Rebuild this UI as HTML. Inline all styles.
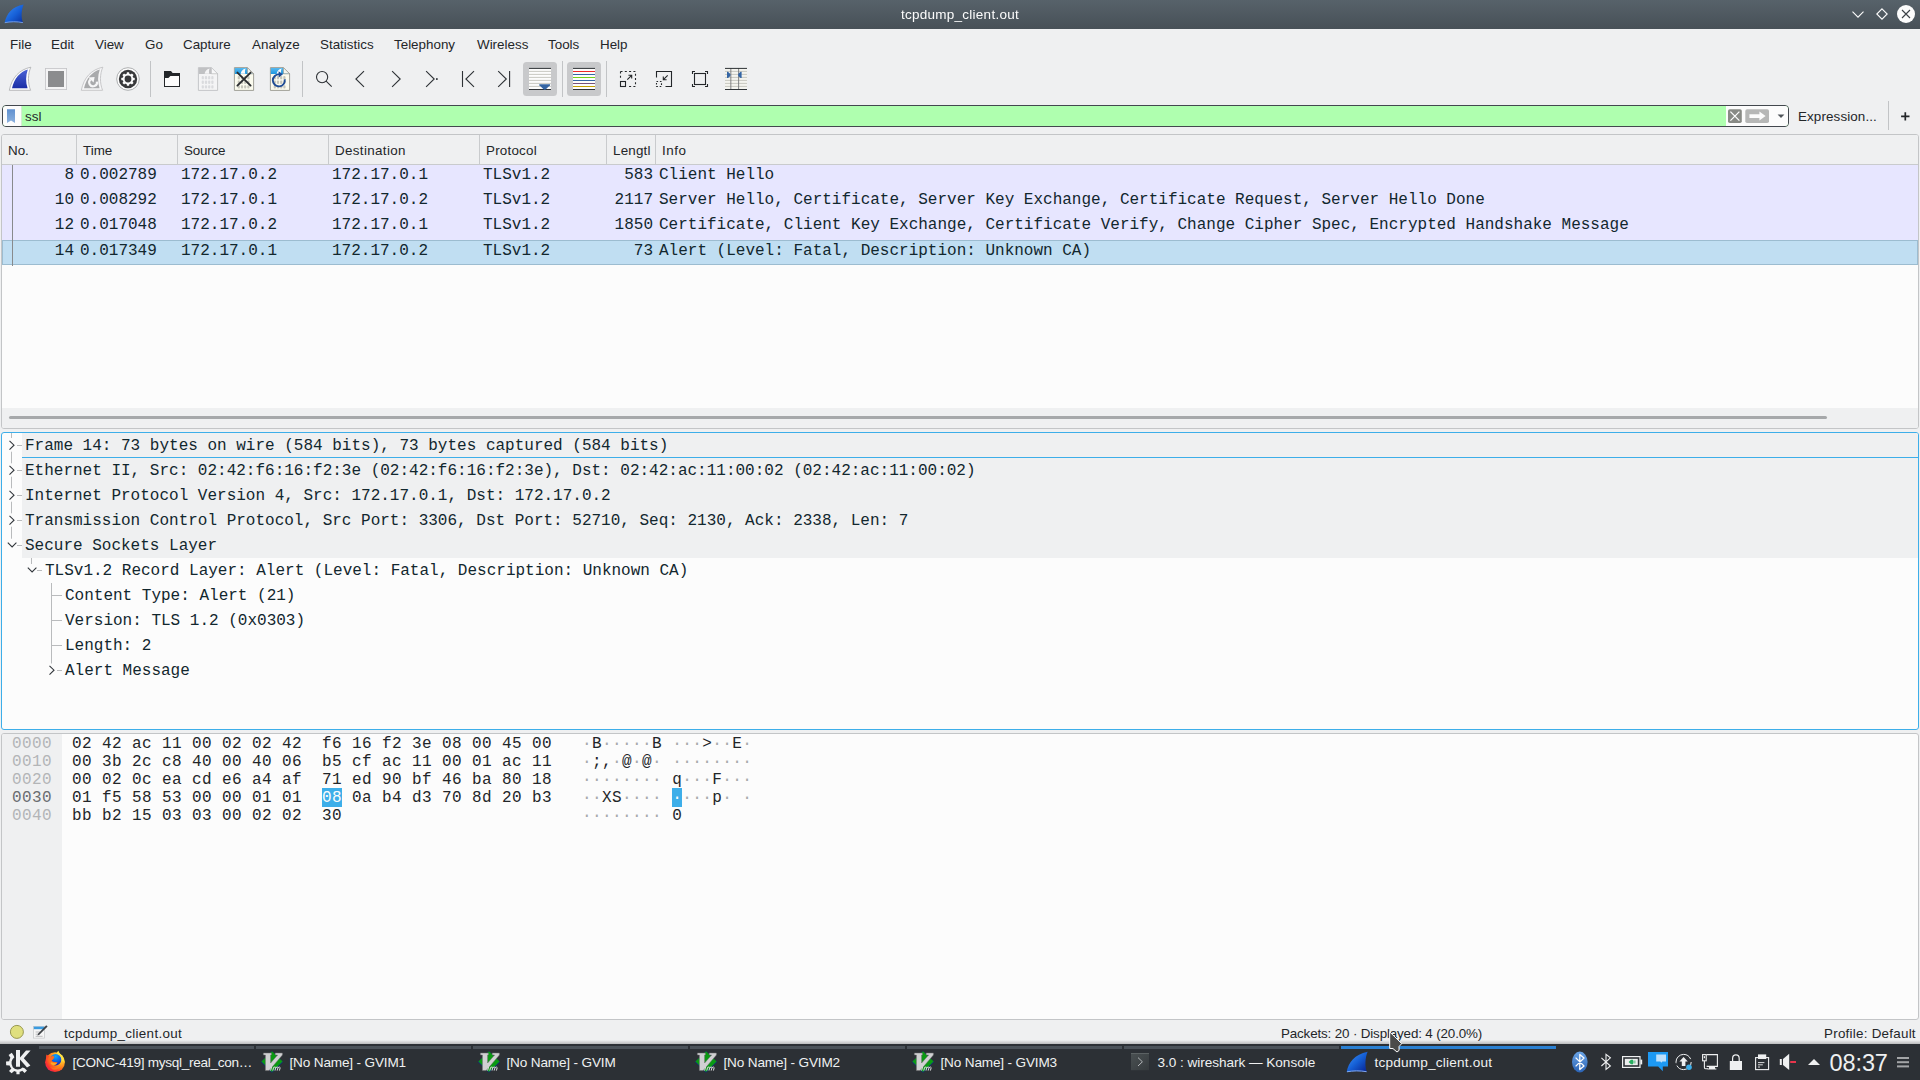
<!DOCTYPE html>
<html>
<head>
<meta charset="utf-8">
<title>tcpdump_client.out</title>
<style>
html,body{margin:0;padding:0;}
body{width:1920px;height:1080px;overflow:hidden;background:#eff0f1;font-family:"Liberation Sans",sans-serif;font-size:13px;color:#232629;position:relative;}
.abs{position:absolute;}
#title{left:0;top:0;width:1920px;height:29px;background:linear-gradient(#57626a,#475057);}
#title .t{left:0;width:1920px;top:7px;text-align:center;color:#fcfcfc;font-size:13.5px;line-height:16px;letter-spacing:0.25px;will-change:transform;}
#menubar{left:0;top:29px;width:1920px;height:30px;background:#eff0f1;}
#menubar span{position:absolute;top:8px;line-height:15px;font-size:13.4px;white-space:nowrap;}
#toolbar{left:0;top:59px;width:1920px;height:42px;}
.sep{position:absolute;width:1px;background:#c6c8ca;top:61px;height:36px;}
#filter{left:2px;top:105px;width:1785px;height:20px;border:1px solid #43484e;border-radius:4px;background:#afffaf;overflow:hidden;}
#filter .bm{left:0;top:0;width:18px;height:21px;background:#fcfcfc;border-right:1px solid #d4ecd2;}
#filter .rt{left:1723px;top:0;width:62px;height:21px;background:#fcfcfc;}
#filter .tx{left:22px;top:3px;line-height:15px;font-size:13.4px;color:#232629;}
.mono{font-family:"Liberation Mono",monospace;font-size:16px;white-space:pre;color:#12272e;}
#plist{left:1px;top:134px;width:1916px;height:293px;border-radius:3px;border:1px solid #c3c5c7;background:#fcfcfc;overflow:hidden;}
#phead{left:0;top:0;width:1916px;height:29px;background:#eff0f1;border-bottom:1px solid #c9cbcd;}
#phead span{position:absolute;top:8px;line-height:15px;font-size:13.4px;white-space:nowrap;}
#phead i{position:absolute;top:0;width:1px;height:29px;background:#c9cbcd;}
.row{position:absolute;left:0;width:1916px;height:25px;background:#e7e6ff;}
.row span{position:absolute;top:0;line-height:20px;}
.row.sel{background:#c0def2;box-shadow:inset 0 0 0 1px #9cbcd0;}
.row.sel span{top:1px;}
#pdet{left:1px;top:432px;width:1916px;height:296px;border:1px solid #3daee9;border-radius:3px;background:#fcfcfc;overflow:hidden;}
.drow{position:absolute;left:0;height:25px;width:1916px;}
.drow span{position:absolute;top:3px;line-height:20px;}
.dbg{position:absolute;left:20px;width:1896px;height:25px;background:#eff0f1;}
#hex{left:1px;top:733px;width:1916px;height:285px;border:1px solid #c3c5c7;border-radius:3px;background:#fcfcfc;overflow:hidden;}
#hex .off{left:0;top:0;width:60px;height:285px;background:#eff0f1;}
.hrow{position:absolute;left:0;height:18px;}
.hrow span{position:absolute;top:1px;line-height:18px;letter-spacing:0.4px;color:#232629;}
.hrow .o{color:#b3b5b7;}
.hrow.cur .o{color:#6a6d70;}
.hrow i{font-style:normal;color:#a8aaac;}
.hrow b{font-weight:normal;background:#3daee9;color:#fcfcfc;padding-top:1px;}
#status{left:0;top:1020px;width:1920px;height:25px;}
#status span{position:absolute;top:6px;line-height:15px;font-size:13.4px;white-space:nowrap;}
#task{left:0;top:1044px;width:1920px;height:36px;background:#2c3035;}
#task span{position:absolute;top:11px;line-height:16px;font-size:13.6px;color:#eff0f1;white-space:nowrap;}
</style>
</head>
<body>
<div id="title" class="abs"><div class="t abs">tcpdump_client.out</div><svg class="abs" style="left:0;top:0" width="1920" height="29" viewBox="0 0 1920 29">
<defs><linearGradient id="gt" x1="0" y1="0" x2="1" y2="1"><stop offset="0" stop-color="#3f8ff0"/><stop offset="0.55" stop-color="#1660d8"/><stop offset="1" stop-color="#0a2f9c"/></linearGradient></defs>
<path d="M4.6 22.8 C6.5 13.5 12 6.5 23.6 4.4 C21.2 10.5 21 17.5 23 22.8 C17 21.6 10 21.8 4.6 22.8 Z" fill="url(#gt)"/>
<path d="M4.8 22.7 C10 21.5 17 21.4 22.9 22.6" fill="none" stroke="#7fa6e8" stroke-width="0.9"/>
<g fill="none" stroke="#fcfcfc" stroke-width="1.1">
<path d="M1852.5 11.6 L1858 17.1 L1863.5 11.6"/>
<path d="M1882 8.8 L1887.2 14 L1882 19.2 L1876.8 14 Z"/>
</g>
<circle cx="1906" cy="14" r="9" fill="#fcfcfc"/>
<path d="M1902 10 L1910 18 M1910 10 L1902 18" stroke="#3b4045" stroke-width="1.1" fill="none"/>
</svg></div>
<div id="menubar" class="abs">
<span style="left:10px">File</span><span style="left:51px">Edit</span><span style="left:95px">View</span><span style="left:145px">Go</span><span style="left:183px">Capture</span><span style="left:252px">Analyze</span><span style="left:320px">Statistics</span><span style="left:394px">Telephony</span><span style="left:477px">Wireless</span><span style="left:548px">Tools</span><span style="left:600px">Help</span>
</div>
<div id="toolbar" class="abs"></div>
<svg class="abs" style="left:0;top:59px" width="1920" height="42" viewBox="0 59 1920 42">
<defs>
<linearGradient id="gfin" x1="0" y1="0" x2="0" y2="1"><stop offset="0" stop-color="#4a62d6"/><stop offset="1" stop-color="#1b2ea6"/></linearGradient>
<linearGradient id="gblue" x1="0" y1="0" x2="0" y2="1"><stop offset="0" stop-color="#58b8ee"/><stop offset="1" stop-color="#1c97e0"/></linearGradient>
</defs>
<!-- separators -->
<g fill="#c2c4c6"><rect x="150" y="61" width="1" height="36"/><rect x="302" y="61" width="1" height="36"/><rect x="562" y="61" width="1" height="36"/><rect x="606" y="61" width="1" height="36"/></g>
<!-- 1 start capture fin -->
<path d="M9.3 90.3 C11.8 77.5 19.5 69.5 30.8 67.2 C27.8 74 27.6 83 30.6 90.3 Z" fill="#fcfcfc" stroke="#a9abad" stroke-width="0.8" stroke-linejoin="round"/>
<path d="M12 88.3 C14.2 78.5 20 72 27.8 69.6 C25.6 76 25.6 82.5 27.6 88.3 Z" fill="url(#gfin)"/>
<!-- 2 stop -->
<rect x="45.4" y="68.4" width="21.2" height="21.2" fill="#f4f4f5" stroke="#c3c4c6" stroke-width="0.8"/>
<rect x="48" y="71" width="16" height="16" fill="#8b8c8e"/>
<!-- 3 restart fin disabled -->
<path d="M81.3 90.3 C83.8 77.5 91.5 69.5 102.8 67.2 C99.8 74 99.6 83 102.6 90.3 Z" fill="#f6f6f7" stroke="#bcbdbf" stroke-width="0.8" stroke-linejoin="round"/>
<path d="M84 88.3 C86.2 78.5 92 72 99.8 69.6 C97.6 76 97.6 82.5 99.6 88.3 Z" fill="#a9aaac"/>
<path d="M96.9 81.6 A3.9 3.9 0 1 1 90.6 79.4" fill="none" stroke="#f6f6f7" stroke-width="2.1"/>
<path d="M88.4 77.4 L94.6 77 L93.6 82.4 Z" fill="#f6f6f7"/>
<!-- 4 options gear -->
<circle cx="128" cy="79" r="11.3" fill="#fcfcfc" stroke="#8e9092" stroke-width="0.7"/>
<circle cx="128" cy="79" r="9.2" fill="#38393b"/>
<g fill="#fcfcfc"><circle cx="128" cy="79" r="5.4"/>
<g id="tooth"><rect x="126.8" y="72.3" width="2.4" height="3" rx="0.4"/><rect x="126.8" y="82.7" width="2.4" height="3" rx="0.4"/></g>
<use href="#tooth" transform="rotate(45 128 79)"/><use href="#tooth" transform="rotate(90 128 79)"/><use href="#tooth" transform="rotate(135 128 79)"/></g>
<circle cx="128" cy="79" r="3.4" fill="#38393b"/>
<!-- 5 open folder -->
<path d="M164 71 H171 L172.6 73 H180 V87 H164 Z" fill="#232629"/>
<path d="M165 78 H168.4 L170.4 76 H179 V86 H165 Z" fill="#fcfcfc"/>
<!-- 6 save disabled file -->
<g id="fileD">
<path d="M198.4 67.6 H211.4 L217.6 73.8 V90.4 H198.4 Z" fill="#f4f4f5" stroke="#b9babc" stroke-width="0.8"/>
<path d="M198.8 68 H211.2 L217.2 74 H198.8 Z" fill="#c0c1c3"/>
<path d="M211.4 67.6 V73.8 H217.6 Z" fill="#f8f8f9" stroke="#b9babc" stroke-width="0.6"/>
<path d="M204.6 73.8 C205 71 206.6 69.2 209.6 68.4 C208.8 70.2 208.8 72.2 209.4 73.8 Z" fill="#f4f4f5"/>
<g fill="#d2d3d5"><rect x="201.7" y="76.0" width="2.2" height="3.3" rx="0.9" opacity="0.75"/><rect x="204.9" y="76.0" width="2.2" height="3.3" rx="0.9" opacity="0.75"/><rect x="208.1" y="76.0" width="2.2" height="3.3" rx="0.9" opacity="0.75"/><rect x="211.3" y="76.0" width="2.2" height="3.3" rx="0.9" opacity="0.75"/><rect x="201.7" y="80.6" width="2.2" height="3.3" rx="0.9" opacity="0.75"/><rect x="204.9" y="80.6" width="2.2" height="3.3" rx="0.9" opacity="0.75"/><rect x="208.1" y="80.6" width="2.2" height="3.3" rx="0.9" opacity="0.75"/><rect x="211.3" y="80.6" width="2.2" height="3.3" rx="0.9" opacity="0.75"/><rect x="201.7" y="85.2" width="2.2" height="3.3" rx="0.9" opacity="0.75"/><rect x="204.9" y="85.2" width="2.2" height="3.3" rx="0.9" opacity="0.75"/><rect x="208.1" y="85.2" width="2.2" height="3.3" rx="0.9" opacity="0.75"/><rect x="211.3" y="85.2" width="2.2" height="3.3" rx="0.9" opacity="0.75"/></g>
</g>
<!-- 7 close file -->
<g id="fileC">
<path d="M234.4 67.6 H247.4 L253.6 73.8 V90.4 H234.4 Z" fill="#fbfbee" stroke="#8a8a82" stroke-width="0.8"/>
<path d="M234.8 68 H247.2 L253.2 74 H234.8 Z" fill="url(#gblue)"/>
<path d="M247.4 67.6 V73.8 H253.6 Z" fill="#f4f4ec" stroke="#8a8a82" stroke-width="0.6"/>
<path d="M240.6 73.8 C241 71 242.6 69.2 245.6 68.4 C244.8 70.2 244.8 72.2 245.4 73.8 Z" fill="#fcfcfc"/>
<g fill="#b4b4aa"><rect x="237.7" y="76.0" width="2.2" height="3.3" rx="0.9" opacity="0.75"/><rect x="240.9" y="76.0" width="2.2" height="3.3" rx="0.9" opacity="0.75"/><rect x="244.1" y="76.0" width="2.2" height="3.3" rx="0.9" opacity="0.75"/><rect x="247.3" y="76.0" width="2.2" height="3.3" rx="0.9" opacity="0.75"/><rect x="237.7" y="80.6" width="2.2" height="3.3" rx="0.9" opacity="0.75"/><rect x="240.9" y="80.6" width="2.2" height="3.3" rx="0.9" opacity="0.75"/><rect x="244.1" y="80.6" width="2.2" height="3.3" rx="0.9" opacity="0.75"/><rect x="247.3" y="80.6" width="2.2" height="3.3" rx="0.9" opacity="0.75"/><rect x="237.7" y="85.2" width="2.2" height="3.3" rx="0.9" opacity="0.75"/><rect x="240.9" y="85.2" width="2.2" height="3.3" rx="0.9" opacity="0.75"/><rect x="244.1" y="85.2" width="2.2" height="3.3" rx="0.9" opacity="0.75"/><rect x="247.3" y="85.2" width="2.2" height="3.3" rx="0.9" opacity="0.75"/></g>
</g>
<path d="M237.4 72.6 L250.6 85.6 M250.6 72.6 L237.4 85.6" stroke="#2b2d30" stroke-width="1.9" stroke-linecap="round"/>
<!-- 8 reload file -->
<use href="#fileC" x="36"/>
<path d="M284.7 79.2 A6 6 0 1 1 279.4 74.4" fill="none" stroke="#1f4c94" stroke-width="1.9"/>
<path d="M278.6 71.2 L283 74.2 L278.8 77.6 Z" fill="#1f4c94"/>
<!-- 9 find -->
<g fill="none" stroke="#2e3236" stroke-width="1.1">
<circle cx="322.1" cy="77.1" r="5.6"/><path d="M326.1 81.1 L331.7 86.7"/>
<path d="M364 71.1 L355.9 79 L364 86.9"/>
<path d="M392.1 71.1 L400.2 79 L392.1 86.9"/>
<path d="M426.1 71.1 L434.2 79 L426.1 86.9"/>
<path d="M462.5 71 V87 M474 71.1 L465.9 79 L474 86.9"/>
<path d="M498.2 71.1 L506.3 79 L498.2 86.9 M509.6 71 V87"/>
</g>
<rect x="436" y="78.2" width="1.7" height="1.7" fill="#2e3236"/>
<!-- pressed buttons -->
<rect x="523" y="62" width="34" height="34" rx="3.5" fill="#c8c9cb"/>
<rect x="567" y="62" width="34" height="34" rx="3.5" fill="#c8c9cb"/>
<!-- 15 autoscroll -->
<rect x="529" y="68" width="22" height="22" fill="#fcfcfc"/>
<g fill="#c3c3bb"><rect x="529" y="70.9" width="22" height="0.9"/><rect x="529" y="73.9" width="22" height="0.9"/><rect x="529" y="76.9" width="22" height="0.9"/><rect x="529" y="79.9" width="22" height="0.9"/><rect x="529" y="82.9" width="22" height="0.9"/><rect x="529" y="85.9" width="22" height="0.9"/></g>
<rect x="529" y="67.9" width="22" height="1" fill="#2e3236"/><rect x="529" y="89" width="22" height="1" fill="#2e3236"/>
<path d="M539.6 84.2 H549.8 Q550.6 84.4 550 85.2 L545.6 89.4 Q544.7 90 543.8 89.4 L539.4 85.2 Q538.8 84.4 539.6 84.2 Z" fill="#3465a4"/>
<!-- 16 colorize -->
<rect x="573" y="68" width="22" height="22" fill="#fcfcfc"/>
<rect x="573" y="67.9" width="22" height="1" fill="#2e3236"/><rect x="573" y="89" width="22" height="1" fill="#2e3236"/>
<rect x="573" y="71" width="22" height="1" fill="#ef2929"/><rect x="573" y="74" width="22" height="1" fill="#3465a4"/><rect x="573" y="77" width="22" height="1" fill="#73d216"/><rect x="573" y="80" width="22" height="1" fill="#3465a4"/><rect x="573" y="83" width="22" height="1" fill="#75507b"/><rect x="573" y="86" width="22" height="1" fill="#c4a000"/>
<!-- 17 zoom in -->
<g fill="none" stroke="#232629" stroke-width="1.1">
<path d="M620.5 71.5 H635.5 V86.5 H629" stroke-dasharray="2 2.3"/><path d="M620.5 71.5 V79" stroke-dasharray="2 2.3"/>
<rect x="620.5" y="81.5" width="5" height="5"/>
<path d="M627.3 79.7 L631.6 75.4 M628.4 75.3 H631.7 V78.6"/>
<!-- 18 zoom out -->
<path d="M656.5 77.5 V71.5 H671.5 V86.5 H665.5"/>
<rect x="656.5" y="81.5" width="5" height="5" stroke-dasharray="1.6 1.8"/>
<path d="M667.7 75.3 L663.4 79.6 M663.3 76.4 V79.7 H666.6"/>
<!-- 19 zoom 1:1 -->
<rect x="694.5" y="73.5" width="11" height="11"/>
<path d="M692.5 74 V71.5 H695 M705 71.5 H707.5 V74 M707.5 84 V86.5 H705 M695 86.5 H692.5 V84"/>
</g>
<!-- 20 resize columns -->
<rect x="725" y="68" width="22" height="22" fill="#f4f4ef"/>
<g fill="#c3c3bb"><rect x="725" y="70.9" width="22" height="0.9"/><rect x="725" y="73.9" width="22" height="0.9"/><rect x="725" y="76.9" width="22" height="0.9"/><rect x="725" y="79.9" width="22" height="0.9"/><rect x="725" y="82.9" width="22" height="0.9"/><rect x="725" y="85.9" width="22" height="0.9"/></g>
<rect x="730.4" y="68" width="0.9" height="22" fill="#77787a"/><rect x="738.2" y="68" width="0.9" height="22" fill="#77787a"/>
<rect x="725" y="67.9" width="22" height="1" fill="#2e3236"/><rect x="725" y="89" width="22" height="1" fill="#2e3236"/>
<path d="M727 71.8 H728 L730.4 74 V76 L728 78 H727 Z" fill="#3465a4"/><path d="M741.6 71.8 H740.6 L738.2 74 V76 L740.6 78 H741.6 Z" fill="#3465a4"/>
</svg>
<div id="filter" class="abs"><div class="bm abs"></div><div class="tx abs">ssl</div><div class="rt abs"></div>
<svg class="abs" style="left:0;top:0" width="1785" height="20" viewBox="3 106 1785 20">
<defs><linearGradient id="gbm" x1="0" y1="0" x2="0" y2="1"><stop offset="0" stop-color="#5e8fcf"/><stop offset="1" stop-color="#8db2de"/></linearGradient></defs>
<path d="M7 109.2 H15 V123 L11 120.4 L7 123 Z" fill="url(#gbm)"/>
<rect x="1728" y="109.2" width="13.8" height="13.8" rx="1.8" fill="#888a85"/>
<path d="M1730.4 111.6 L1739.4 120.6 M1739.4 111.6 L1730.4 120.6" stroke="#fcfcfc" stroke-width="1.3" fill="none"/>
<rect x="1745.3" y="109.2" width="23.7" height="13.8" rx="1.8" fill="#b6b7b6"/>
<path d="M1749.4 114.2 H1759.4 V111.6 L1765.6 116.1 L1759.4 120.6 V118 H1749.4 Z" fill="#fcfcfc"/>
<path d="M1777.6 114.4 H1784.4 L1781 118 Z" fill="#50555a"/>
</svg></div>
<div class="abs" style="left:1798px;top:109px;line-height:16px;font-size:13.4px;white-space:nowrap;letter-spacing:0.12px" id="expr">Expression...</div>
<div class="abs" style="left:1888px;top:101px;width:1px;height:29px;background:#c2c4c6"></div>
<svg class="abs" style="left:1900px;top:111px" width="11" height="11" viewBox="0 0 11 11"><path d="M5.3 1.2 V9.6 M1.1 5.4 H9.5" stroke="#232629" stroke-width="1.7" fill="none"/></svg>
<div id="plist" class="abs">
<div id="phead" class="abs">
<span style="left:6px">No.</span><i style="left:74px"></i>
<span style="left:81px">Time</span><i style="left:175px"></i>
<span style="left:182px;letter-spacing:-0.2px">Source</span><i style="left:326px"></i>
<span style="left:333px;letter-spacing:0.35px">Destination</span><i style="left:477px"></i>
<span style="left:484px;letter-spacing:0.22px">Protocol</span><i style="left:604px"></i>
<span style="left:611px;letter-spacing:0.2px">Lengtl</span><i style="left:653px"></i>
<span style="left:660px;letter-spacing:0.5px">Info</span>
</div>
<div class="row mono" style="top:30px"><span style="right:1844px">8</span><span style="left:78px">0.002789</span><span style="left:179px">172.17.0.2</span><span style="left:330px">172.17.0.1</span><span style="left:481px">TLSv1.2</span><span style="right:1265px">583</span><span style="left:657px">Client Hello</span></div>
<div class="row mono" style="top:55px"><span style="right:1844px">10</span><span style="left:78px">0.008292</span><span style="left:179px">172.17.0.1</span><span style="left:330px">172.17.0.2</span><span style="left:481px">TLSv1.2</span><span style="right:1265px">2117</span><span style="left:657px">Server Hello, Certificate, Server Key Exchange, Certificate Request, Server Hello Done</span></div>
<div class="row mono" style="top:80px"><span style="right:1844px">12</span><span style="left:78px">0.017048</span><span style="left:179px">172.17.0.2</span><span style="left:330px">172.17.0.1</span><span style="left:481px">TLSv1.2</span><span style="right:1265px">1850</span><span style="left:657px">Certificate, Client Key Exchange, Certificate Verify, Change Cipher Spec, Encrypted Handshake Message</span></div>
<div class="row mono sel" style="top:105px"><span style="right:1844px">14</span><span style="left:78px">0.017349</span><span style="left:179px">172.17.0.1</span><span style="left:330px">172.17.0.2</span><span style="left:481px">TLSv1.2</span><span style="right:1265px">73</span><span style="left:657px">Alert (Level: Fatal, Description: Unknown CA)</span></div>
<div class="abs" style="left:10px;top:30px;width:1px;height:101px;background:#888a8c"></div>
<div class="abs" style="left:0;top:273px;width:1916px;height:21px;background:#eff0f1"></div><div class="abs" style="left:7px;top:281px;width:1818px;height:3px;border-radius:2px;background:#a6a8aa"></div>
</div>
<div id="pdet" class="abs">
<div class="dbg" style="top:0;height:125px"></div><div class="abs" style="left:20px;top:24px;width:1896px;height:1px;background:#3daee9"></div>
<div class="drow mono" style="top:0px"><span style="left:23px">Frame 14: 73 bytes on wire (584 bits), 73 bytes captured (584 bits)</span></div>
<div class="drow mono" style="top:25px"><span style="left:23px">Ethernet II, Src: 02:42:f6:16:f2:3e (02:42:f6:16:f2:3e), Dst: 02:42:ac:11:00:02 (02:42:ac:11:00:02)</span></div>
<div class="drow mono" style="top:50px"><span style="left:23px">Internet Protocol Version 4, Src: 172.17.0.1, Dst: 172.17.0.2</span></div>
<div class="drow mono" style="top:75px"><span style="left:23px">Transmission Control Protocol, Src Port: 3306, Dst Port: 52710, Seq: 2130, Ack: 2338, Len: 7</span></div>
<div class="drow mono" style="top:100px"><span style="left:23px">Secure Sockets Layer</span></div>
<div class="drow mono" style="top:125px"><span style="left:43px">TLSv1.2 Record Layer: Alert (Level: Fatal, Description: Unknown CA)</span></div>
<div class="drow mono" style="top:150px"><span style="left:63px">Content Type: Alert (21)</span></div>
<div class="drow mono" style="top:175px"><span style="left:63px">Version: TLS 1.2 (0x0303)</span></div>
<div class="drow mono" style="top:200px"><span style="left:63px">Length: 2</span></div>
<div class="drow mono" style="top:225px"><span style="left:63px">Alert Message</span></div>
<svg class="abs" style="left:0;top:0" width="120" height="296" viewBox="2 433 120 296">
<g fill="#b9bbbd"><rect x="11" y="433" width="1" height="5"/><rect x="17" y="445" width="5" height="1"/><rect x="11" y="451.7" width="1" height="11.6"/><rect x="17" y="470" width="5" height="1"/><rect x="11" y="476.7" width="1" height="11.6"/><rect x="17" y="495" width="5" height="1"/><rect x="11" y="501.7" width="1" height="11.6"/><rect x="17" y="520" width="5" height="1"/><rect x="11" y="526.7" width="1" height="12.0"/><rect x="17" y="545" width="5" height="1"/><rect x="31" y="558" width="1" height="6"/><rect x="37" y="570" width="5" height="1"/><rect x="51" y="583" width="1" height="80.5"/><rect x="51" y="595" width="11" height="1"/><rect x="51" y="620" width="11" height="1"/><rect x="51" y="645" width="11" height="1"/><rect x="57" y="670" width="5" height="1"/></g>
<g fill="none" stroke="#31363b" stroke-width="1.1"><path d="M9.5 440.8 L14 445.2 L9.5 449.6"/><path d="M9.5 465.8 L14 470.2 L9.5 474.6"/><path d="M9.5 490.8 L14 495.2 L9.5 499.6"/><path d="M9.5 515.8 L14 520.2 L9.5 524.6"/><path d="M7.8 542.7 L12.1 547 L16.4 542.7"/><path d="M27.8 567.7 L32.1 572 L36.4 567.7"/><path d="M49.5 665.8 L54 670.2 L49.5 674.6"/></g></svg>
</div>
<div id="hex" class="abs"><div class="off abs"></div>
<div class="hrow mono" style="top:0px"><span class="o" style="left:10px">0000</span><span style="left:70px">02 42 ac 11 00 02 02 42  f6 16 f2 3e 08 00 45 00</span><span style="left:580px"><i>·</i>B<i>·</i><i>·</i><i>·</i><i>·</i><i>·</i>B <i>·</i><i>·</i><i>·</i>&gt;<i>·</i><i>·</i>E<i>·</i></span></div>
<div class="hrow mono" style="top:18px"><span class="o" style="left:10px">0010</span><span style="left:70px">00 3b 2c c8 40 00 40 06  b5 cf ac 11 00 01 ac 11</span><span style="left:580px"><i>·</i>;,<i>·</i>@<i>·</i>@<i>·</i> <i>·</i><i>·</i><i>·</i><i>·</i><i>·</i><i>·</i><i>·</i><i>·</i></span></div>
<div class="hrow mono" style="top:36px"><span class="o" style="left:10px">0020</span><span style="left:70px">00 02 0c ea cd e6 a4 af  71 ed 90 bf 46 ba 80 18</span><span style="left:580px"><i>·</i><i>·</i><i>·</i><i>·</i><i>·</i><i>·</i><i>·</i><i>·</i> q<i>·</i><i>·</i><i>·</i>F<i>·</i><i>·</i><i>·</i></span></div>
<div class="hrow mono cur" style="top:54px"><span class="o" style="left:10px">0030</span><span style="left:70px">01 f5 58 53 00 00 01 01  <b>08</b> 0a b4 d3 70 8d 20 b3</span><span style="left:580px"><i>·</i><i>·</i>XS<i>·</i><i>·</i><i>·</i><i>·</i> <b>·</b><i>·</i><i>·</i><i>·</i>p<i>·</i> <i>·</i></span></div>
<div class="hrow mono" style="top:72px"><span class="o" style="left:10px">0040</span><span style="left:70px">bb b2 15 03 03 00 02 02  30</span><span style="left:580px"><i>·</i><i>·</i><i>·</i><i>·</i><i>·</i><i>·</i><i>·</i><i>·</i> 0</span></div>
</div>
<div id="status" class="abs">
<span id="st1" style="letter-spacing:0.31px;left:64px">tcpdump_client.out</span>
<span id="st2" style="letter-spacing:-0.15px;left:1281px">Packets: 20 · Displayed: 4 (20.0%)</span>
<span id="st3" style="letter-spacing:0.25px;left:1824px">Profile: Default</span>
<svg class="abs" style="left:0;top:0" width="60" height="25" viewBox="0 1020 60 25">
<circle cx="16.9" cy="1031.9" r="6.5" fill="#dfdf7e" stroke="#8f8f45" stroke-width="0.9"/>
<rect x="33.5" y="1026.5" width="11" height="11.6" fill="#f7f7f7" stroke="#c4c6c8" stroke-width="0.7"/>
<rect x="33.8" y="1026.6" width="10.4" height="2.6" fill="#3a9be0"/>
<path d="M35.6 1032 H40 M35.6 1034.2 H38.6 M35.6 1036.3 H42.6" stroke="#a9abad" stroke-width="0.8"/>
<path d="M46.2 1025.2 L47.6 1026.6 L39.4 1034.8 L37.4 1035.6 L38.2 1033.4 Z" fill="#3f4347"/>
</svg>
</div>
<div class="abs" style="left:0;top:1040px;width:1920px;height:4px;background:linear-gradient(rgba(0,0,0,0),rgba(0,0,0,0.22))"></div>
<div id="task" class="abs">
<div class="abs" style="left:39px;top:2px;width:215px;height:3px;background:#4b5259"></div><span id="tk0" style="letter-spacing:-0.3px;left:72.5px">[CONC-419] mysql_real_con…</span>
<div class="abs" style="left:256px;top:2px;width:215px;height:3px;background:#4b5259"></div><span id="tk1" style="letter-spacing:-0.17px;left:289.5px">[No Name] - GVIM1</span>
<div class="abs" style="left:473px;top:2px;width:215px;height:3px;background:#4b5259"></div><span id="tk2" style="letter-spacing:-0.17px;left:506.5px">[No Name] - GVIM</span>
<div class="abs" style="left:690px;top:2px;width:215px;height:3px;background:#4b5259"></div><span id="tk3" style="letter-spacing:-0.17px;left:723.5px">[No Name] - GVIM2</span>
<div class="abs" style="left:907px;top:2px;width:215px;height:3px;background:#4b5259"></div><span id="tk4" style="letter-spacing:-0.17px;left:940.5px">[No Name] - GVIM3</span>
<div class="abs" style="left:1124px;top:2px;width:215px;height:3px;background:#4b5259"></div><span id="tk5" style="letter-spacing:-0.04px;left:1157.5px">3.0 : wireshark — Konsole</span>
<div class="abs" style="left:1341px;top:2px;width:215px;height:3px;background:#2a80d2"></div><span id="tk6" style="letter-spacing:0.2px;left:1374.5px">tcpdump_client.out</span>
<svg class="abs" style="left:0;top:0" width="1920" height="36" viewBox="0 1044 1920 36">
<defs>
<linearGradient id="gws" x1="0.1" y1="0.1" x2="0.9" y2="0.9"><stop offset="0" stop-color="#3c8ef2"/><stop offset="0.5" stop-color="#1560d6"/><stop offset="1" stop-color="#0a2c9c"/></linearGradient>
<radialGradient id="gff" cx="0.8" cy="0.2" r="1.05"><stop offset="0" stop-color="#fff36a"/><stop offset="0.28" stop-color="#ffc02a"/><stop offset="0.55" stop-color="#ff7a1a"/><stop offset="0.78" stop-color="#fb3030"/><stop offset="1" stop-color="#e01a70"/></radialGradient>
<radialGradient id="gfb" cx="0.5" cy="0.2" r="0.85"><stop offset="0" stop-color="#08a8ff"/><stop offset="0.55" stop-color="#0a5ee4"/><stop offset="1" stop-color="#2a1a98"/></radialGradient>
<linearGradient id="gbt" x1="0" y1="0" x2="0" y2="1"><stop offset="0" stop-color="#6aa4e6"/><stop offset="1" stop-color="#2a62b4"/></linearGradient>
<linearGradient id="gko" x1="0" y1="0" x2="1" y2="1"><stop offset="0" stop-color="#4a5052"/><stop offset="1" stop-color="#363b3e"/></linearGradient>
<g id="vim">
<path d="M272 1051.2 L283 1062 L272 1072.8 L261 1062 Z" fill="#0a2a8a"/>
<path d="M272 1051.2 L282.6 1061.6 L272 1072 L261.4 1061.6 Z" fill="#0a9a12"/>
<path d="M263.4 1053 H271.4 V1055 H270.6 V1063 L277.6 1055 H275.2 V1053 H282.4 V1055 L269.2 1070.6 H265.4 V1055 H263.4 Z" fill="#d0d0d2" stroke="#6a6a6c" stroke-width="0.5"/>
<path d="M271.6 1067 L270.6 1070.6 M273.6 1067.4 L272.8 1070.6 M273.6 1067.4 Q275.4 1066.4 275.8 1067.6 L275 1070.6 M275.8 1067.6 Q277.6 1066.4 278 1067.6 L277.2 1070.6 M278 1067.6 Q279.8 1066.4 280.2 1067.6 L279.4 1070.6" stroke="#d8d8da" stroke-width="1" fill="none"/>
</g>
</defs>
<!-- KDE -->
<g fill="#eff0f1">
<path d="M16 1050 H20 V1057.4 L26 1050.4 H30.6 L23.8 1058.2 L30.4 1065.6 L27 1067.6 L20 1059.4 V1066.8 H16 Z"/>
<path d="M13.6 1055.4 L11.8 1052.8 L8.6 1055 L10.4 1057.8 Q9.4 1059.4 9.2 1061.2 L6 1061.6 L6.2 1065.2 L9.6 1065.4 Q10.2 1067.2 11.4 1068.6 L9 1071 L11.6 1073.2 L14.2 1071 Q15.2 1071.6 16.4 1071.8 L16.4 1074.2 L19.6 1074.2 L19.6 1071.8 Q21 1071.6 22.2 1070.8 L24.6 1073 L27 1070.4 L24.6 1068.2 L22.6 1067.6 Q20.6 1069.6 17.8 1069.6 Q14.8 1069.4 12.8 1067.2 Q11 1064.6 11.6 1061.6 Q12.2 1058.8 14.4 1057.2 Z"/>
</g>
<!-- Firefox -->
<circle cx="55" cy="1062.2" r="9.9" fill="url(#gff)"/>
<path d="M56.6 1053 Q57.4 1051.6 58.4 1050.8 Q59 1053 61.4 1055 Q64.6 1058.4 64.6 1062 L60 1060 Q60 1056 56.6 1053 Z" fill="#ffe040"/>
<path d="M46.4 1054.6 Q47.6 1056 49.4 1056.2 L46.6 1060 Q45.6 1057.4 46.4 1054.6 Z" fill="#ff4a26"/>
<circle cx="55.6" cy="1059.8" r="5.7" fill="url(#gfb)"/>
<path d="M49.6 1056.2 Q51.8 1056.8 53 1055.4 L54.6 1057.2 Q53.2 1058 53.6 1059 L51.6 1060.6 Q52.4 1062.2 54.6 1062 Q56.6 1061.6 57.6 1062.8 Q56 1063.4 55.4 1064.4 Q52 1065.4 50 1063 Q48 1060 49.6 1056.2 Z" fill="#ff6a1e"/>
<path d="M51.8 1062.2 Q54 1063.4 57.4 1062.8 Q56.2 1065.6 53 1065.2 Q51 1064.6 50.4 1063 Z" fill="#ffa726"/>
<path d="M49.6 1066.4 Q54.6 1069.4 60.6 1065.4 Q58 1070.4 52.6 1069.6 Z" fill="#ff8a1e" opacity="0.55"/>
<!-- Vims -->
<use href="#vim"/><use href="#vim" x="217"/><use href="#vim" x="434"/><use href="#vim" x="651"/>
<!-- Konsole -->
<rect x="1131" y="1053" width="18" height="17.2" fill="url(#gko)"/>
<rect x="1131" y="1053" width="18" height="0.8" fill="#62686a"/>
<path d="M1138 1057.6 L1142.4 1061.8 L1138 1066" stroke="#b4b8ba" stroke-width="1" fill="none"/>
<!-- Wireshark -->
<path d="M1346.6 1072 C1348.6 1062.4 1354.6 1054.4 1367.6 1051.8 C1365 1058.4 1364.8 1066 1366.8 1072 C1360.4 1070.8 1352.6 1071 1346.6 1072 Z" fill="url(#gws)"/>
<path d="M1347 1071.8 C1352.6 1070.6 1360.4 1070.5 1366.6 1071.7" fill="none" stroke="#86aaea" stroke-width="1"/>
<!-- tray: bluetooth blue -->
<ellipse cx="1579.8" cy="1062" rx="7.8" ry="10.4" fill="url(#gbt)"/>
<path d="M1575.6 1057.6 L1584 1066 L1579.8 1069.6 V1054.4 L1584 1058 L1575.6 1066.4" stroke="#fcfcfc" stroke-width="1.3" fill="none" stroke-linejoin="round"/>
<!-- bluetooth white -->
<path d="M1601.4 1057.8 L1610.4 1066 L1606 1069.4 V1054.4 L1610.4 1057.8 L1601.4 1066" stroke="#eff0f1" stroke-width="1.1" fill="none"/>
<!-- battery -->
<rect x="1622.6" y="1056.6" width="17.4" height="10.8" fill="none" stroke="#eff0f1" stroke-width="1.2"/>
<rect x="1640.4" y="1059.6" width="1.8" height="4.8" fill="#eff0f1"/>
<rect x="1624.8" y="1058.8" width="13" height="6.4" fill="#eceded"/>
<path d="M1628.6 1062 L1631 1059.8 H1633 V1060.8 H1635.6 V1061.6 H1633 V1062.4 H1635.6 V1063.2 H1633 V1064.2 H1631 Z" fill="#27ae60"/>
<!-- chat bubble -->
<path d="M1648 1052 H1668 V1066.6 H1662.8 V1071.2 L1658.2 1066.6 H1648 Z" fill="#1d99f3"/>
<path d="M1656.2 1054.4 H1666 V1061.4 H1662.4 L1661.2 1062.8 L1660.4 1061.4 H1656.2 Z" fill="#bfe0fb"/>
<!-- update -->
<circle cx="1683.6" cy="1062" r="7.6" fill="none" stroke="#eff0f1" stroke-width="1" stroke-dasharray="20 2.5 22 3.3"/>
<path d="M1683.6 1057 L1687.8 1061.4 H1685.4 V1066 H1681.8 V1061.4 H1679.4 Z" fill="#eff0f1"/>
<circle cx="1689" cy="1067.2" r="2.8" fill="#3daee9"/>
<!-- network -->
<g fill="none" stroke="#eff0f1" stroke-width="1.1">
<path d="M1706.6 1054.6 H1717.4 V1066.4 H1706.6"/>
<rect x="1702.6" y="1054.6" width="3.6" height="6.2"/>
<path d="M1704.4 1061 V1067.4 Q1704.4 1068.8 1706 1068.8 H1708"/>
</g>
<rect x="1703.8" y="1056.2" width="1.2" height="2" fill="#eff0f1"/>
<path d="M1709 1066.4 H1715 V1068.4 H1716.4 V1069.4 H1707.6 V1068.4 H1709 Z" fill="#eff0f1"/>
<!-- lock -->
<path d="M1732.6 1061 V1058.4 A3.3 3.6 0 0 1 1739.2 1058.4 V1061" stroke="#eff0f1" stroke-width="1.2" fill="none"/>
<rect x="1729.8" y="1061" width="12.2" height="9" fill="#eff0f1"/>
<!-- klipper -->
<g fill="none" stroke="#eff0f1" stroke-width="1.1"><rect x="1755.6" y="1057.6" width="13" height="12"/></g>
<rect x="1758" y="1054.4" width="8.2" height="4.6" fill="#eff0f1"/>
<path d="M1758 1062.6 H1764.4 M1758 1064.8 H1762.8 M1758 1067 H1760" stroke="#eff0f1" stroke-width="0.9"/>
<!-- speaker -->
<rect x="1779.8" y="1059" width="2" height="6" fill="#eff0f1"/>
<path d="M1783 1059 L1789.2 1053.8 V1070 L1783 1065 Z" fill="#eff0f1"/>
<rect x="1790.2" y="1061" width="5.8" height="2" fill="#e8354c"/>
<!-- up triangle -->
<path d="M1808 1065 L1814 1059 L1820 1065 Z" fill="#eff0f1"/>
<!-- hamburger -->
<g fill="#a3a5a7"><rect x="1897" y="1057" width="12" height="2"/><rect x="1897" y="1061.2" width="12" height="2"/><rect x="1897" y="1065.4" width="12" height="2"/></g>
</svg>
<span id="clock" style="left:1829.6px;top:6px;font-size:23.5px;line-height:27px;letter-spacing:-0.12px">08:37</span>
</div>
<svg class="abs" style="left:1385px;top:1028px" width="22" height="28" viewBox="1385 1028 22 28"><path d="M1389.7 1031.9 L1401.7 1043.6 L1399 1046.6 L1399.1 1050.4 L1397 1052 L1393 1048.6 L1389.7 1048.4 Z" fill="#4a4a4a" stroke="#fcfcfc" stroke-width="1" stroke-linejoin="round"/></svg>
</body>
</html>
